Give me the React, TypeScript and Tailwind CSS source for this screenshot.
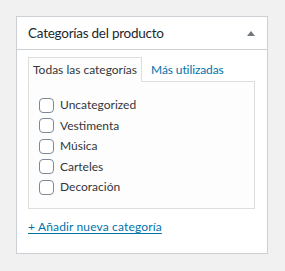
import { useState } from 'react';

const categories = ['Uncategorized', 'Vestimenta', 'Música', 'Carteles', 'Decoración'];

export default function App() {
  const [checked, setChecked] = useState<Record<string, boolean>>({});

  return (
    <div className="min-h-[271px] bg-[#f1f1f1] p-4 font-['Lato','Open_Sans',sans-serif] text-[12px] text-[#444]">
      <div className="w-[252px] border border-[#ccd0d4] bg-white">
        {/* header */}
        <div className="flex h-[33px] items-center justify-between border-b border-[#ccd0d4] pl-[11px] pr-[12px]">
          <h2 className="text-[13.5px] tracking-[-0.25px] text-[#23282d]">Categorías del producto</h2>
          <span className="mt-[1px] h-0 w-0 border-x-[4px] border-b-[5px] border-x-transparent border-b-[#72777c]" />
        </div>

        <div className="px-[11px] pt-[7px] pb-[17px]">
          {/* tabs */}
          <div className="flex h-[24px] items-stretch">
            <div className="relative z-10 flex h-[25px] items-center border border-[#dddddd] border-b-[#fdfdfd] bg-[#fdfdfd] px-[4px] text-[#32373c]">
              Todas las categorías
            </div>
            <a href="#" className="flex items-center px-[9px] pt-px tracking-[-0.1px] text-[#0073aa]">
              Más utilizadas
            </a>
          </div>

          {/* panel */}
          <div className="mr-[1px] h-[128px] border border-[#dddddd] bg-[#fdfdfd] pl-[10px] pt-[13px]">
            <ul>
              {categories.map((c) => (
                <li key={c} className="flex h-[20.5px] items-center">
                  <label className="flex items-center">
                    <input
                      type="checkbox"
                      checked={!!checked[c]}
                      onChange={() => setChecked({ ...checked, [c]: !checked[c] })}
                      className="h-[15px] w-[15px] appearance-none rounded-[4px] border border-[#7e8993] bg-white"
                    />
                    <span className="ml-[6px] text-[#32373c]">{c}</span>
                  </label>
                </li>
              ))}
            </ul>
          </div>

          <a href="#" className="mt-[9px] inline-block leading-[18px] tracking-[0.15px] text-[#0073aa] underline underline-offset-[2px]">
            + Añadir nueva categoría
          </a>
        </div>
      </div>
    </div>
  );
}
